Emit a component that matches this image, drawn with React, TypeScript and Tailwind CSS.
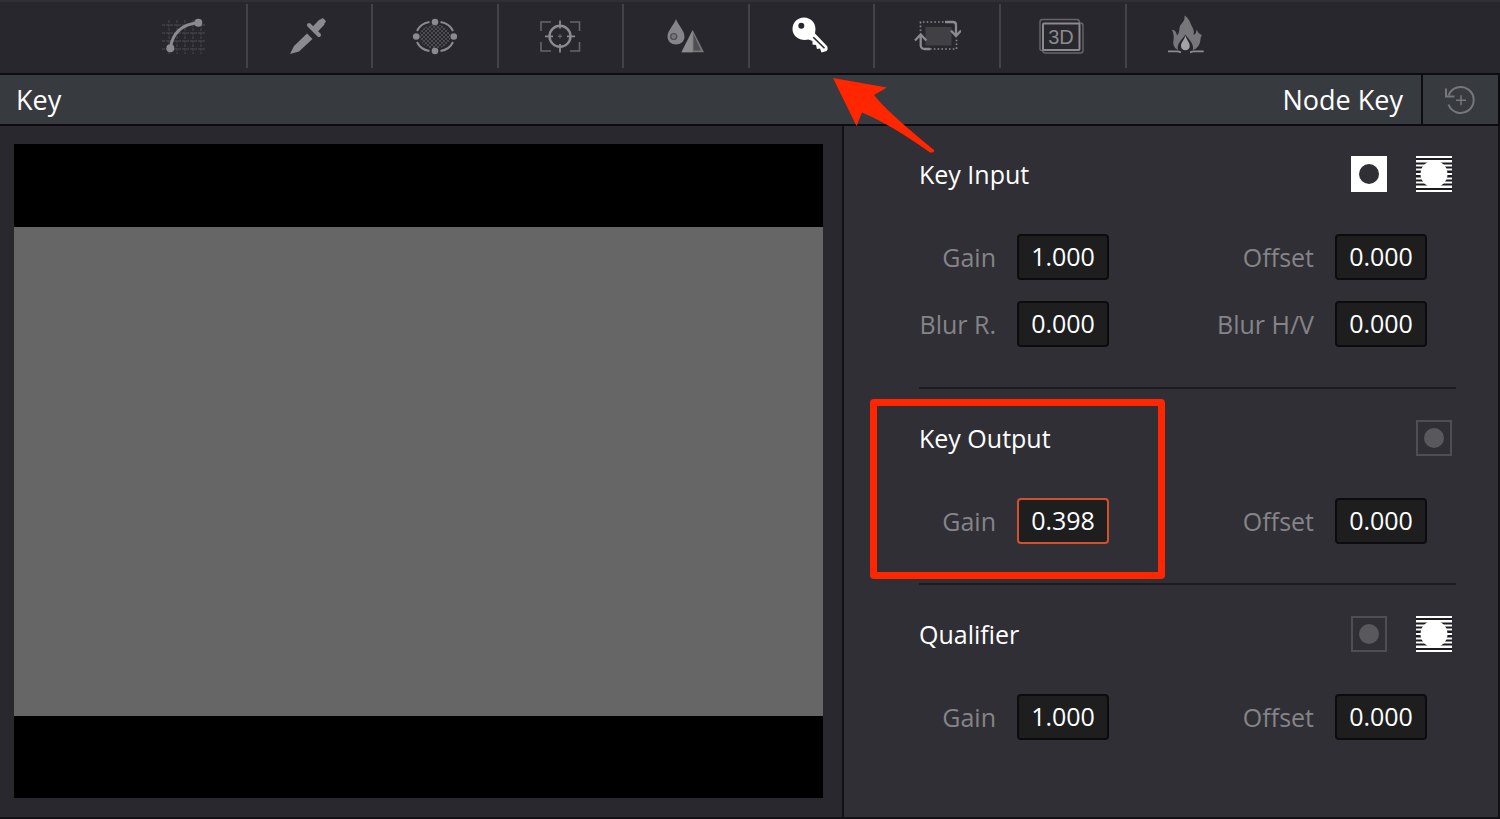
import React, { useState } from "react";
import clsx from "clsx";

interface TabItem {
  id: string;
  icon: React.ReactNode;
}

interface FieldProps {
  id: string;
  label: string;
  initial: string;
  wide?: boolean;
  highlighted?: boolean;
}

const CurvesIcon = () => (
  <svg width="48" height="48" viewBox="0 0 48 48" fill="none">
    <path
      d="M9 8v34M17 8v34M25 8v34M33 8v34M41 8v34M2 13h44M2 21h44M2 29h44M2 37h44"
      stroke="#424147"
      strokeWidth="1.3"
      strokeDasharray="3 1"
    />
    <path d="M10.3 36.3C12 24 19 12.5 38.3 10.7" stroke="#8b8a8e" strokeWidth="3" />
    <circle cx="10.3" cy="36.3" r="4" fill="#8b8a8e" />
    <circle cx="38.3" cy="10.7" r="4" fill="#8b8a8e" />
  </svg>
);

const DropperIcon = () => (
  <svg width="48" height="48" viewBox="0 0 48 48" fill="#8b8a8e">
    <path d="M5 42L9 34L22 21.5L27.5 27L14 39.5Z" />
    <path d="M24 13L34 23" stroke="#8b8a8e" strokeWidth="4" strokeLinecap="round" />
    <path d="M28 19.5L37 10" stroke="#8b8a8e" strokeWidth="7" strokeLinejoin="round" />
    <path d="M34 8.5L36 7a2 2 0 0 1 3 0l1 1a2 2 0 0 1 0 3l-2 2Z" />
  </svg>
);

const WindowIcon = () => (
  <svg width="48" height="48" viewBox="0 0 48 48" fill="none">
    <defs>
      <pattern id="mesh" width="4" height="4" patternUnits="userSpaceOnUse">
        <path d="M0 0h2v2h-2zM2 2h2v2h-2z" fill="#4d4c51" />
      </pattern>
    </defs>
    <ellipse cx="24" cy="24.5" rx="15.5" ry="12" fill="url(#mesh)" />
    <path
      d="M6 19C8 14.5 12.5 11 18.5 10M29.5 10C35.5 11 40 14.5 42 19M42 30C40 34.5 35.5 38 29.5 39M18.5 39C12.5 38 8 34.5 6 30"
      stroke="#8b8a8e"
      strokeWidth="2"
    />
    <g fill="#8b8a8e">
      <circle cx="24" cy="10" r="3.3" />
      <circle cx="24" cy="39" r="3.3" />
      <circle cx="5.2" cy="24.5" r="3.3" />
      <circle cx="42.8" cy="24.5" r="3.3" />
    </g>
  </svg>
);

const TrackerIcon = () => (
  <svg width="48" height="48" viewBox="0 0 48 48" fill="none">
    <path
      d="M15 10H5v9M34 10h9.5v9M43.5 30v9H34M15 39H5v-9"
      stroke="#66656a"
      strokeWidth="1.6"
    />
    <circle cx="24" cy="24.3" r="10.5" stroke="#8b8a8e" strokeWidth="2.4" />
    <path d="M24 8.5v8M24 32v8.5M9 24.3h8M31 24.3h8" stroke="#8b8a8e" strokeWidth="1.8" />
    <path d="M22 24.3h4M24 22.3v4" stroke="#66656a" strokeWidth="1.2" />
  </svg>
);

const BlurIcon = () => (
  <svg width="48" height="48" viewBox="0 0 48 48" fill="none">
    <path
      d="M14 7C16 13 22.5 18.5 22.5 24.5C22.5 29.5 18.5 32.5 14 32.5S5.500 29.5 5.500 24.5C5.500 18.5 12 13 14 7Z"
      fill="#858488"
    />
    <circle cx="11.7" cy="24.5" r="3" fill="#77767a" stroke="#4a494e" strokeWidth="1.2" />
    <path d="M30.7 18L42 40.3H19.5Z" fill="#77767a" />
    <path d="M30.7 18V40.3H19.5Z" fill="#8b8a8e" />
    <path d="M31.5 22L39 38.5H31.5Z" fill="#4f4e53" />
  </svg>
);

const KeyIcon = () => (
  <svg width="48" height="48" viewBox="1 0 48 48" fill="white">
    <path
      fillRule="evenodd"
      d="M17 5.5C23.5 5.5 28.5 10.5 28.5 17L28 21.5L40 34Q41.5 37 39.5 39L34.5 40.5L33 36.5L30 37L29 33L25.5 32.5L25.5 29L21.5 27.5C14 29.5 5.5 25 5.5 17C5.5 10.5 10.5 5.5 17 5.5ZM14.3 10.7A3 3 0 1 0 14.3 16.7A3 3 0 1 0 14.3 10.7Z"
    />
    <path d="M26.3 25.3L37.5 36.3" stroke="#28272d" strokeWidth="1.6" />
  </svg>
);

const SizingIcon = () => (
  <svg width="48" height="48" viewBox="0 0 48 48" fill="none">
    <path d="M12.5 15h26v18.5h-26z" fill="#414045" />
    <path
      d="M7.500 19v-9H32M17 37h26.5V26"
      stroke="#8b8a8e"
      strokeWidth="1.6"
      strokeDasharray="1.6 2.2"
    />
    <path
      d="M32 10h8q3 0 3 3v10M38 18.5l5 5.5l5-5.5M17 37h-5q-4.300 0-4.300-4V23M2 28.5l5.700-6l5.700 6"
      stroke="#8b8a8e"
      strokeWidth="2.3"
    />
  </svg>
);

const StereoIcon = () => (
  <svg width="48" height="48" viewBox="1 0 48 48" fill="none">
    <path
      d="M2 37V10q0-2.500 2.500-2.500H39q2.500 0 2.500 3.500h1q2.500 0 2.500 2.500V38.500q0 2.500-2.500 2.500H7.500Q5 41 4.500 38.500Q2 38.500 2 37Z"
      stroke="#66656a"
      strokeWidth="1.4"
    />
    <rect x="5" y="11.5" width="36.5" height="26.5" rx="1" stroke="#8b8a8e" strokeWidth="2" />
    <text
      x="23"
      y="32"
      textAnchor="middle"
      fill="#8b8a8e"
      className="font-['Liberation_Sans',sans-serif] text-[20px]"
    >
      3D
    </text>
  </svg>
);

const FlameIcon = () => (
  <svg width="48" height="48" viewBox="1 0 48 48" fill="none">
    <path
      d="M21.5 3.5C27 7 27 11 29.5 15.5C31 18 31 20 30.5 23C33 22 33.5 20 33.5 17.5C35 20 36 22.5 39 23C36.5 26 38.5 30 35 34.5Q33 37 30 38C31 31 26 28 22.4 22.5C19 28 13.5 31 15 38Q11.5 36.5 10.5 33C9.5 29 12.5 26 9 17.5C13 18.5 13.5 21 14 23.5C17.5 20 15.5 16 17.5 13C20 10 22 8.5 21.5 3.5Z"
      fill="#77767a"
    />
    <path
      d="M22.4 23.5C23.5 28 26.7 30 26.7 34C26.7 36.5 25 38.2 22.4 38.2S18 36.5 18 34C18 30 21.5 28 22.4 23.5Z"
      fill="#a3a2a6"
    />
    <path d="M5 39.3h10l3 1M40.7 39.3H30l-3 1" stroke="#8b8a8e" strokeWidth="1.8" />
  </svg>
);

const ResetIcon = () => (
  <svg width="32" height="32" viewBox="0 0 32 32" fill="none" stroke="#77777b" strokeWidth="2">
    <path d="M3.500 11.500A13 13 0 1 1 3.500 20.500" />
    <path d="M1 4.500V12.500H9.500" />
    <path d="M11 16.300h10M16 11.300v10" strokeWidth="1.5" />
  </svg>
);

const MatteButton = ({ active }: { active?: boolean }) => (
  <button type="button" aria-pressed={!!active} aria-label="Matte">
    <svg width="36" height="36" viewBox="0 0 36 36">
      {active ? (
        <>
          <path d="M0 0h36v36H0z" fill="white" />
          <circle cx="18" cy="18" r="10" fill="#302f35" />
        </>
      ) : (
        <>
          <path d="M1 1h34v34H1z" fill="none" stroke="#4f4e54" strokeWidth="2" />
          <circle cx="18" cy="18" r="10" fill="#59585d" />
        </>
      )}
    </svg>
  </button>
);

const InvertButton = () => (
  <button type="button" aria-label="Invert">
    <svg width="36" height="36" viewBox="0 0 36 36" fill="white">
      <path d="M0 0h36v36H0z" fill="#1b1a1f" />
      <path d="M0 0h36v2H0zM0 4h36v2.500H0zM0 8.500h36v2H0zM0 12.500h36v2H0zM0 17h36v2H0zM0 21.500h36v2H0zM0 25.500h36v2H0zM0 29.500h36v2.500H0zM0 34h36v2H0z" />
      <circle cx="18" cy="18" r="13.500" />
    </svg>
  </button>
);

const Arrow = () => (
  <svg
    className="pointer-events-none absolute left-[82px] top-[73px] z-10"
    width="104"
    height="78"
    viewBox="0 0 104 78"
    fill="#ff2600"
  >
    <path d="M1 1L55 10.500L42 18Q54 34 102 73Q103 76 98 75.500Q58 47 30 35.500L24.500 49Z" />
  </svg>
);

const tabs: TabItem[] = [
  { id: "Curves", icon: <CurvesIcon /> },
  { id: "Qualifier", icon: <DropperIcon /> },
  { id: "Window", icon: <WindowIcon /> },
  { id: "Tracker", icon: <TrackerIcon /> },
  { id: "Blur", icon: <BlurIcon /> },
  { id: "Key", icon: <KeyIcon /> },
  { id: "Sizing", icon: <SizingIcon /> },
  { id: "Stereo", icon: <StereoIcon /> },
  { id: "Data Burn", icon: <FlameIcon /> },
];

const Field: React.FC<FieldProps> = ({ id, label, initial, wide, highlighted }) => {
  const [value, setValue] = useState(initial);

  return (
    <div className="flex items-center gap-[21px]">
      <label
        htmlFor={id}
        className={clsx("whitespace-nowrap text-right text-[#858488]", wide ? "w-[98px]" : "w-[77px]")}
      >
        {label}
      </label>
      <input
        id={id}
        value={value}
        onChange={(e) => setValue(e.target.value)}
        className={clsx(
          "h-[46px] w-[92px] rounded border-2 bg-[#1e1e1f] pb-0.5 text-center text-white outline-none",
          highlighted ? "border-[#d2502f]" : "border-[#0c0b10]"
        )}
      />
    </div>
  );
};

const SectionHeader: React.FC<{ title: string; children: React.ReactNode }> = ({
  title,
  children,
}) => (
  <div className="mb-[42px] flex h-9 items-center justify-between pr-1">
    <h2 className="font-medium text-white">{title}</h2>
    <div className="flex gap-[29px]">{children}</div>
  </div>
);

const Row = ({ children }: { children: React.ReactNode }) => (
  <div className="flex justify-between pr-[29px] font-medium">{children}</div>
);

const App: React.FC = () => {
  return (
    <div className="flex min-h-screen flex-col border-b-2 border-[#121116] bg-[#29282e] font-['Open_Sans','Noto_Sans',sans-serif] text-[25px] leading-9">
      <nav className="flex border-b-2 border-t-2 border-b-[#0d0c11] border-t-[#302f35] bg-[#28272d] pb-[5px] pl-[122px] pr-[250px] pt-0.5">
        {tabs.map((tab) => (
          <div
            key={tab.id}
            className="relative flex h-16 flex-1 justify-center border-r-2 border-[#434247] last:border-r-0"
          >
            <button type="button" aria-label={tab.id}>
              {tab.icon}
            </button>
            {tab.id === "Key" && <Arrow />}
          </div>
        ))}
      </nav>

      <header className="flex h-[51px] border-b-2 border-[#0d0c11] bg-[#373a3e] text-[27px] font-medium text-white">
        <h1 className="flex flex-1 items-center pl-4">Key</h1>
        <span className="flex items-center pr-[18px]">Node Key</span>
        <button
          type="button"
          aria-label="Reset"
          className="flex w-[79px] items-center justify-center border-l-2 border-r-2 border-[#0d0c11]"
        >
          <ResetIcon />
        </button>
      </header>

      <main className="flex flex-1">
        <div className="flex flex-1 pb-[19px] pl-3.5 pr-[19px] pt-[18px]">
          <div className="flex flex-1 flex-col bg-black pb-[82px] pt-[83px]">
            <div className="flex-1 bg-[#666666]" />
          </div>
        </div>

        <div className="w-[658px] border-l-2 border-r-2 border-[#121116] bg-[#302f35] pl-[75px] pr-[42px]">
          <section className="pb-10 pt-[30px]">
            <SectionHeader title="Key Input">
              <MatteButton active />
              <InvertButton />
            </SectionHeader>
            <div className="space-y-[21px]">
              <Row>
                <Field id="input-gain" label="Gain" initial="1.000" />
                <Field id="input-offset" label="Offset" initial="0.000" wide />
              </Row>
              <Row>
                <Field id="input-blur-r" label="Blur R." initial="0.000" />
                <Field id="input-blur-hv" label="Blur H/V" initial="0.000" wide />
              </Row>
            </div>
          </section>

          <section className="relative border-t-2 border-[#1c1b20] pb-[39px] pt-[31px]">
            <SectionHeader title="Key Output">
              <MatteButton />
            </SectionHeader>
            <Row>
              <Field id="output-gain" label="Gain" initial="0.398" highlighted />
              <Field id="output-offset" label="Offset" initial="0.000" wide />
            </Row>
            <div className="pointer-events-none absolute -left-[49px] top-2.5 z-10 h-[180px] w-[295px] rounded-sm border-[7px] border-[#ff2600]" />
          </section>

          <section className="border-t-2 border-[#1c1b20] pb-[39px] pt-[31px]">
            <SectionHeader title="Qualifier">
              <MatteButton />
              <InvertButton />
            </SectionHeader>
            <Row>
              <Field id="qualifier-gain" label="Gain" initial="1.000" />
              <Field id="qualifier-offset" label="Offset" initial="0.000" wide />
            </Row>
          </section>
        </div>
      </main>
    </div>
  );
};

export default App;
